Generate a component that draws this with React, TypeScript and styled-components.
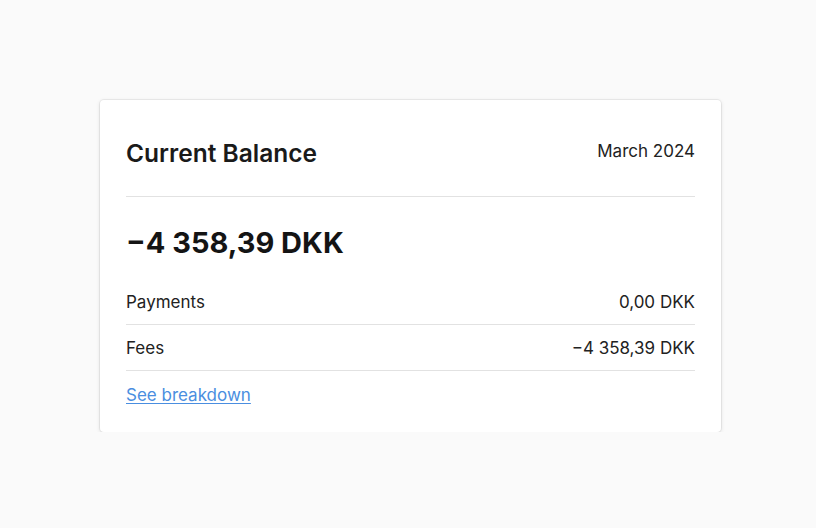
import React from "react";
import styled, { createGlobalStyle } from "styled-components";

const Global = createGlobalStyle`
  html, body { margin: 0; padding: 0; background: #fafafa; }
  body { font-family: Inter, "Noto Sans", sans-serif; color: #1f1f1f; }
`;

const Page = styled.div`
  padding: 100px 0 0 100px;
`;

const Card = styled.section`
  box-sizing: border-box;
  width: 621px;
  background: #fff;
  border-radius: 4px;
  box-shadow: 0 0 0 1px rgba(0, 0, 0, 0.05), 0 1px 4px rgba(0, 0, 0, 0.12);
  padding: 36px 26px 26px;
`;

const Header = styled.div`
  display: flex;
  justify-content: space-between;
  align-items: flex-start;
  padding-bottom: 26px;
  border-bottom: 1px solid #e2e2e2;
`;

const Title = styled.h2`
  margin: 0;
  font-size: 24.5px;
  line-height: 34px;
  font-weight: 600;
  color: #1a1a1a;
`;

const Period = styled.div`
  font-size: 17px;
  line-height: 30px;
  color: #222;
`;

const Amount = styled.div`
  font-size: 29px;
  font-weight: 700;
  line-height: 34px;
  color: #141414;
  padding: 29px 0 31px;
`;

const Row = styled.div`
  display: flex;
  justify-content: space-between;
  font-size: 17px;
  line-height: 22px;
  color: #222;
  padding: 12px 0 11px;
  border-bottom: 1px solid #e2e2e2;
  &:first-of-type { padding-top: 0; }
`;

const Link = styled.a`
  display: inline-block;
  margin-top: 13px;
  font-size: 17px;
  line-height: 22px;
  color: #4a8ee0;
  text-decoration: underline;
  text-underline-offset: 2px;
`;

export default function App() {
  return (
    <>
      <Global />
      <Page>
        <Card>
          <Header>
            <Title>Current Balance</Title>
            <Period>March 2024</Period>
          </Header>
          <Amount>−4 358,39 DKK</Amount>
          <div>
            <Row>
              <span>Payments</span>
              <span>0,00 DKK</span>
            </Row>
            <Row>
              <span>Fees</span>
              <span>−4 358,39 DKK</span>
            </Row>
          </div>
          <Link href="#">See breakdown</Link>
        </Card>
      </Page>
    </>
  );
}
